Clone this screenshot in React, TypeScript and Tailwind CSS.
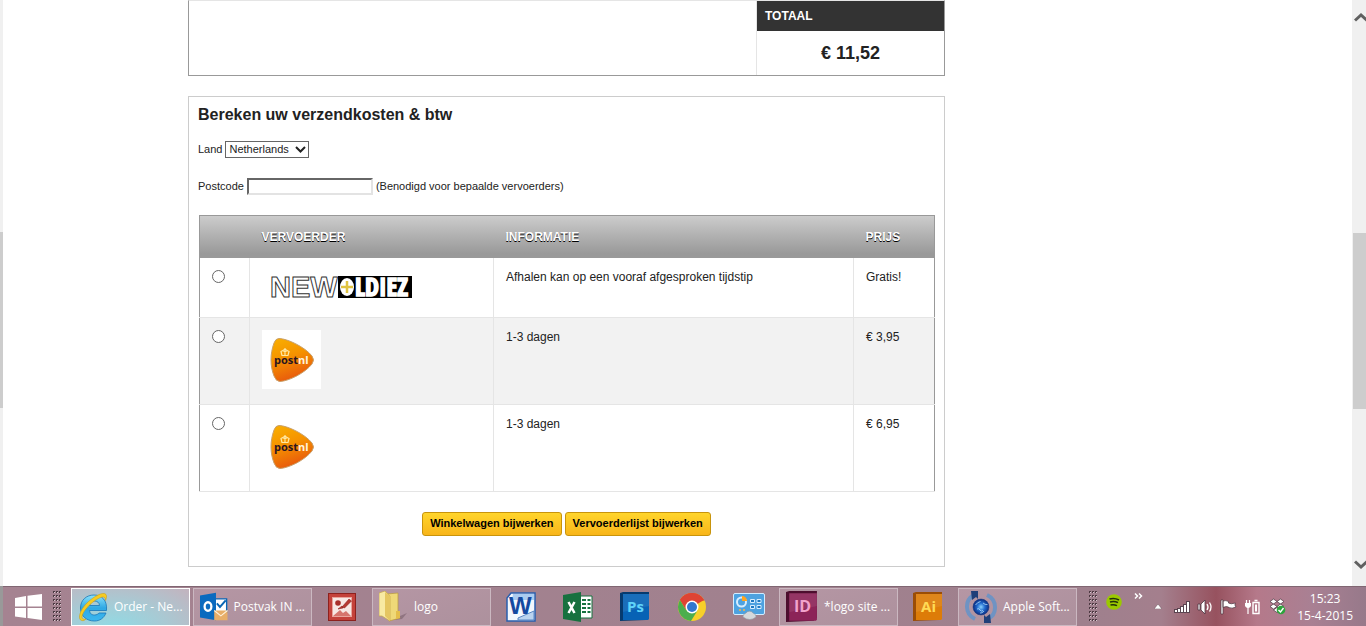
import { useState } from "react";
import type { ReactNode } from "react";

type Carrier = {
  id: string;
  name: string;
  logo: ReactNode;
  info: string;
  price: string;
};

const carriers: Carrier[] = [
  {
    id: "pickup",
    name: "New Oldiez",
    logo: <NewOldiezLogo />,
    info: "Afhalen kan op een vooraf afgesproken tijdstip",
    price: "Gratis!",
  },
  {
    id: "postnl",
    name: "PostNL",
    logo: <PostNlLogo />,
    info: "1-3 dagen",
    price: "€ 3,95",
  },
  {
    id: "postnl-signed",
    name: "PostNL aangetekend",
    logo: <PostNlLogo />,
    info: "1-3 dagen",
    price: "€ 6,95",
  },
];

function NewOldiezLogo() {
  return (
    <svg width="160" height="32" viewBox="0 0 160 32" className="block">
      <text
        x="8"
        y="27"
        fontFamily="Liberation Sans, Arial, sans-serif"
        fontSize="29"
        fill="#fff"
        fontWeight="700"
        stroke="#333"
        strokeWidth="1"
      >
        NEW
      </text>
      <rect x="76" y="6" width="74" height="22" fill="#000" />
      <ellipse cx="85" cy="17" rx="7" ry="9" fill="#fff" />
      <path d="M85 11v12M79 17h12" stroke="#e0c341" strokeWidth="2.5" />
      <text
        x="93"
        y="26"
        fontFamily="Liberation Sans Narrow, Open Sans Condensed, Liberation Sans, sans-serif"
        fontSize="25"
        fontWeight="700"
        fill="#fff"
        stroke="#fff"
        strokeWidth="1.5"
      >
        LDIEZ
      </text>
    </svg>
  );
}

function PostNlLogo() {
  return (
    <svg width="59" height="59" viewBox="0 0 59 59" className="block">
      <defs>
        <linearGradient id="postnl" x1="0" y1="0" x2="0.35" y2="1">
          <stop offset="0" stopColor="#f9b000" />
          <stop offset="0.5" stopColor="#f59200" />
          <stop offset="1" stopColor="#e85a0c" />
        </linearGradient>
      </defs>
      <rect width="59" height="59" fill="#fff" />
      <path
        d="M17 8.500C25 8.500 43 17 50 26Q53 30 50 34C43 43 27 51 18 51.500Q14 51.500 12 46C8 36 8 24 12 13Q13.500 8.500 17 8.500Z"
        fill="url(#postnl)"
        stroke="#c9a06a"
        strokeWidth="1"
      />
      <path
        d="M20 25.500l-1-4 2-1 2 1.500 2-1.500 2 1-1 4zM23 18v7M21.500 19.500h3"
        fill="none"
        stroke="#ffe9a3"
        strokeWidth="1.200"
      />
      <text x="12" y="34" fontFamily="Open Sans, sans-serif" fontSize="11" fontWeight="700" fill="#2a1420">
        post<tspan fill="#fff3dc">nl</tspan>
      </text>
    </svg>
  );
}

function CartTotal() {
  return (
    <div className="flex h-[76px] border border-[#999] border-t-[#e5e5e5]">
      <div className="flex-1 border-r border-[#e5e5e5]" />
      <div className="w-[187px]">
        <h3 className="h-[30px] bg-[#333] pl-2 text-xs leading-[30px] font-bold text-white">TOTAAL</h3>
        <p className="text-center text-lg leading-[44px] font-bold">€ 11,52</p>
      </div>
    </div>
  );
}

function ShippingTable() {
  const [selected, setSelected] = useState("");

  return (
    <table className="w-full table-fixed border-collapse border-x border-t border-[#999] text-left text-xs">
      <colgroup>
        <col className="w-[50px]" />
        <col className="w-[244px]" />
        <col />
        <col className="w-[81px]" />
      </colgroup>
      <thead>
        <tr className="h-[42px] bg-linear-to-b from-[#ccc] to-[#999] to-90% text-white [text-shadow:0_1px_0_#000]">
          <th />
          <th className="px-3">VERVOERDER</th>
          <th className="px-3">INFORMATIE</th>
          <th className="px-3">PRIJS</th>
        </tr>
      </thead>
      <tbody>
        {carriers.map((carrier) => (
          <tr key={carrier.id} className="border-b border-[#e5e5e5] align-top even:bg-[#f2f2f2]">
            <td className="border-r border-[#e5e5e5] px-3 py-3">
              <input
                type="radio"
                name="carrier"
                aria-label={carrier.name}
                checked={selected === carrier.id}
                onChange={() => setSelected(carrier.id)}
                className="block size-[13px] appearance-none rounded-full border border-[#666] bg-white checked:bg-[#333]"
              />
            </td>
            <td className="border-r border-[#e5e5e5] px-3 pt-3 pb-[15px]">{carrier.logo}</td>
            <td className="border-r border-[#e5e5e5] px-3 py-[11px]">{carrier.info}</td>
            <td className="px-3 py-[11px]">{carrier.price}</td>
          </tr>
        ))}
      </tbody>
    </table>
  );
}

function YellowButton({ children }: { children: ReactNode }) {
  return (
    <button
      type="button"
      className="h-6 rounded-[3px] border border-[#c8940c] bg-linear-to-b from-[#ffd52b] to-[#f8b51a] px-[7px] text-[11px] font-bold text-black"
    >
      {children}
    </button>
  );
}

function ShippingForm() {
  return (
    <form className="mt-5 border border-[#ccc] px-[9px] pb-[30px]">
      <h2 className="pt-2 text-base leading-5 font-bold">Bereken uw verzendkosten &amp; btw</h2>
      <div className="mt-4 flex items-center gap-[3px] text-[11px]">
        <label htmlFor="country">Land</label>
        <div className="relative">
          <select
            id="country"
            className="block h-[17px] w-[84px] appearance-none border border-[#666] bg-white pl-[3px] text-[11px] leading-[15px]"
          >
            <option>Netherlands</option>
          </select>
          <svg width="11" height="8" viewBox="0 0 11 8" className="pointer-events-none absolute top-[5px] right-[3px]">
            <path d="M1 1l4.500 4.500L10 1" fill="none" stroke="#222" strokeWidth="2" />
          </svg>
        </div>
      </div>
      <div className="mt-5 flex items-center gap-[3px] text-[11px]">
        <label htmlFor="postcode">Postcode</label>
        <input
          id="postcode"
          type="text"
          className="h-[17px] w-[126px] border-2 border-t-[#666] border-r-[#e3e3e3] border-b-[#e3e3e3] border-l-[#666] bg-white"
        />
        <span>(Benodigd voor bepaalde vervoerders)</span>
      </div>
      <div className="mt-5 pl-px">
        <ShippingTable />
      </div>
      <div className="mt-5 flex justify-center gap-[3px]">
        <YellowButton>Winkelwagen bijwerken</YellowButton>
        <YellowButton>Vervoerderlijst bijwerken</YellowButton>
      </div>
    </form>
  );
}

function ScrollBar() {
  return (
    <div className="flex w-[14px] shrink-0 flex-col items-end justify-between overflow-hidden bg-[#f0f0f0] pt-3 pb-4">
      <svg width="12" height="12" viewBox="0 0 12 12" className="shrink-0">
        <path d="M1 8.500l6-5.500 6 5.500" fill="none" stroke="#606060" strokeWidth="3" />
      </svg>
      <div className="mt-[60px] h-[176px] w-[13px] bg-[#cdcdcd]" />
      <svg width="12" height="12" viewBox="0 0 12 12" className="shrink-0">
        <path d="M1 3.500l6 5.500 6-5.500" fill="none" stroke="#606060" strokeWidth="3" />
      </svg>
    </div>
  );
}

function Grip() {
  return (
    <svg width="9" height="31" viewBox="0 0 9 31" className="shrink-0">
      <defs>
        <pattern id="grip" width="3" height="4" patternUnits="userSpaceOnUse">
          <rect width="2" height="2" fill="#4c3942" />
          <rect x="1" y="1" width="1" height="1" fill="#d8c6ce" />
        </pattern>
      </defs>
      <rect width="9" height="31" fill="url(#grip)" />
    </svg>
  );
}

function WindowsIcon() {
  return (
    <svg width="27" height="26" viewBox="0 0 27 26" fill="#fff">
      <path d="M0 4l11-2v10.500H0zM12.500 1.800L27 0v12.500H12.500zM0 14h11v10L0 22.500zM12.500 14H27v12l-14.500-2z" />
    </svg>
  );
}

function ExplorerIcon() {
  return (
    <svg width="30" height="30" viewBox="0 0 30 30">
      <defs>
        <linearGradient id="ie" x1="0" y1="0" x2="0" y2="1">
          <stop offset="0" stopColor="#8be3fb" />
          <stop offset="0.5" stopColor="#2fa8e4" />
          <stop offset="1" stopColor="#3cb7ef" />
        </linearGradient>
      </defs>
      <path
        d="M28.500 18.500H11.500c.5 3.500 2.500 4.500 5 4.500 2 0 3.500-.8 4.500-2h7c-2 5-6.200 8-11.500 8C8.500 29 2.500 24 2.500 16S8.500 3 16 3s13.500 5 12.500 15.500zM11.500 13.500h10C21.500 10.500 19 9 16.500 9s-4.500 1.500-5 4.500z"
        fill="url(#ie)"
        stroke="#1b76b8"
        strokeWidth="0.8"
      />
      <path
        d="M6 28.500C-1.500 30 1 19.500 8 12S25.500-1 28 2.500c1 1.500.5 3.500-.5 6 0-4-2.500-4.500-7-2C13 10 4 20 4 25c0 2 1.500 2.500 4 2z"
        fill="#f6cb22"
        stroke="#c99a10"
        strokeWidth="0.500"
      />
    </svg>
  );
}

function OutlookIcon() {
  return (
    <svg width="31" height="31" viewBox="0 0 31 31">
      <path d="M17 7h13v15H17z" fill="#fff" stroke="#0a66b5" strokeWidth="1.500" />
      <path d="M19 12l3.500 4L29 8.500" fill="none" stroke="#0a66b5" strokeWidth="2.200" />
      <path d="M0 3l18-3v31L0 28z" fill="#0a6abf" />
      <ellipse cx="9" cy="15.500" rx="3.800" ry="4.800" fill="none" stroke="#fff" strokeWidth="2.600" />
      <path d="M16 20h15v11H16z" fill="#e8ae68" />
      <path d="M16 20l7.500 6 7.500-6" fill="none" stroke="#fff2dd" strokeWidth="1.200" />
    </svg>
  );
}

function PictureManagerIcon() {
  return (
    <svg width="28" height="28" viewBox="0 0 28 28">
      <rect x="0.500" y="0.500" width="27" height="27" fill="#c4423b" stroke="#8d211e" />
      <rect x="4.500" y="4.500" width="19" height="19" fill="#f7e8e4" stroke="#e9a49c" />
      <circle cx="10" cy="10" r="2.800" fill="#a82f2a" />
      <path d="M5 23l7-6 3 3 3-2 5 5z" fill="#d6756d" />
      <path d="M14 14l7-8 2.500 2-7 7zM14 13l-4 3 5-1z" fill="#b63a32" stroke="#8d211e" strokeWidth="0.600" />
    </svg>
  );
}

function FolderIcon() {
  return (
    <svg width="29" height="31" viewBox="0 0 29 31">
      <path d="M15 29l6-4 7-3-5 6z" fill="#705662" opacity="0.500" />
      <path d="M8 3l11-1v20l2 5-11 3z" fill="#efd878" stroke="#b99a3c" strokeWidth="0.700" />
      <path d="M17 20h4v7l-4 1z" fill="#e4bd4b" />
      <path d="M0 2l6-2 5 5v25L3 25H0z" fill="#f8eaa3" stroke="#c5a648" strokeWidth="0.700" />
      <path d="M6 1v24l5 5V5z" fill="#e5c661" />
    </svg>
  );
}

function WordIcon() {
  return (
    <svg width="30" height="30" viewBox="0 0 30 30">
      <path d="M5 1h24v28H1V6z" fill="#f3f8fe" stroke="#2a5fae" strokeWidth="1.500" />
      <path d="M7 2h21v6H6z" fill="#aacbf0" />
      <path d="M12 26l16-7v9H12z" fill="#bad3ef" stroke="#5a86c3" />
      <text x="3" y="22" fontFamily="Liberation Sans, sans-serif" fontWeight="700" fontSize="24" fill="#1549a0">
        W
      </text>
    </svg>
  );
}

function ExcelIcon() {
  return (
    <svg width="30" height="30" viewBox="0 0 30 30">
      <path d="M16 4h13v22H16z" fill="#fff" stroke="#17713f" />
      <path
        d="M19 8h4M24.500 8h3M19 12h4M24.500 12h3M19 16h4M24.500 16h3M19 20h4M24.500 20h3"
        stroke="#17713f"
        strokeWidth="2"
      />
      <path d="M0 3l18-3v30L0 27z" fill="#17713f" />
      <path d="M5.500 10l6 11M11.500 10l-6 11" stroke="#fff" strokeWidth="2.500" />
    </svg>
  );
}

type AdobeIconProps = { label: string; front: string; side: string; text: string; size?: number };

function AdobeIcon({ label, front, side, text, size = 30 }: AdobeIconProps) {
  return (
    <svg width={size} height={size} viewBox="0 0 30 30">
      <path d="M0 1l3-1h26v25l-3 3-26 1z" fill={side} />
      <path d="M3 2h26v25l-1 1H3z" fill={front} />
      <path d="M3 2h26v12L3 20z" fill="#fff" opacity="0.080" />
      <text
        x="15.500"
        y="20"
        textAnchor="middle"
        fontFamily="Open Sans, sans-serif"
        fontWeight="700"
        fontSize="15"
        fill={text}
      >
        {label}
      </text>
    </svg>
  );
}

function ChromeIcon() {
  return (
    <svg width="28" height="28" viewBox="0 0 28 28">
      <circle cx="14" cy="14" r="14" fill="#f7cf2a" />
      <path d="M14 14L1.900 7A14 14 0 0 1 26.100 7z" fill="#de4434" />
      <path d="M14 7.500h12.400A14 14 0 0 0 1.900 7l6 10z" fill="#de4434" />
      <path d="M1.900 7A14 14 0 0 0 13 28l6.500-10.500L14 20l-6-3z" fill="#4cae4d" />
      <circle cx="14" cy="14" r="6.500" fill="#fff" />
      <circle cx="14" cy="14" r="5" fill="#3277cf" />
    </svg>
  );
}

function ControlPanelIcon() {
  return (
    <svg width="32" height="28" viewBox="0 0 32 28">
      <rect x="0.500" y="0.500" width="31" height="21" rx="1.500" fill="#4ea2e0" stroke="#d2ecff" />
      <circle cx="8.500" cy="9" r="4.500" fill="none" stroke="#d6edff" strokeWidth="2" />
      <path d="M9 8V3a5 5 0 0 1 5 5z" fill="#ffa51f" />
      <path d="M17.500 6.500h4v3h-4zM24 6.500h4v3h-4zM17.500 12.500h4v3h-4zM24 12.500h4v3h-4z" fill="#207ac3" stroke="#d6edff" />
      <circle cx="7" cy="17" r="1" fill="#ffb33e" />
      <circle cx="11" cy="17" r="1" fill="#ffb33e" />
      <path
        d="M10 24a6 4 0 0 1 3-4 4 3.500 0 0 1 7 0 6 4 0 0 1 3 4q-6 5-13 0z"
        fill="#d5d8dc"
        stroke="#9199a1"
        strokeWidth="0.600"
      />
    </svg>
  );
}

function AppleUpdateIcon() {
  return (
    <svg width="32" height="32" viewBox="0 0 32 32">
      <defs>
        <radialGradient id="globe">
          <stop offset="0" stopColor="#8bd2ff" />
          <stop offset="0.5" stopColor="#2169cc" />
          <stop offset="1" stopColor="#0b2c80" />
        </radialGradient>
      </defs>
      <path d="M10 28C-.5 23-.5 9 9 4" fill="none" stroke="#6f93c3" strokeWidth="4" />
      <path d="M22 4c10.500 5 10.500 19 1 24" fill="none" stroke="#6f93c3" strokeWidth="4" />
      <path d="M6 0h7v8l-2-2-4 3z" fill="#203f79" />
      <path d="M26 32h-7v-8l2 2 4-3z" fill="#203f79" />
      <circle cx="16" cy="16" r="8" fill="url(#globe)" stroke="#143882" strokeWidth="0.500" />
      <path
        d="M10.500 14q2-3 5-3.500M12 18q2-1 3 1t3 .5M18 12q2 2 4.500 1.500M15 22q2 .5 4-2"
        fill="none"
        stroke="#c2eaff"
        strokeWidth="0.900"
        opacity="0.800"
      />
    </svg>
  );
}

type TaskButtonProps = { label: string; active?: boolean; children: ReactNode };

function TaskButton({ label, active = false, children }: TaskButtonProps) {
  return (
    <button
      type="button"
      className={
        active
          ? "flex h-[38px] w-[119px] items-center gap-[6px] border border-white bg-radial-[at_35%_110%] from-[#8fdbe5] via-[#a9c9d3] to-[#c3b3be] px-[6px] whitespace-nowrap"
          : "flex h-[38px] w-[119px] items-center gap-[6px] border border-[#cbb8c1] bg-linear-to-br from-[#b596a4] to-[#ad919d] px-[6px] whitespace-nowrap"
      }
    >
      {children}
      <span>{label}</span>
    </button>
  );
}

function TaskIcon({ label, children }: { label: string; children: ReactNode }) {
  return (
    <button type="button" aria-label={label} className="flex h-[38px] w-[54px] items-center justify-center">
      {children}
    </button>
  );
}

function SystemTray() {
  return (
    <div className="flex flex-1 items-center">
      <svg width="16" height="30" viewBox="0 0 16 30">
        <circle cx="8" cy="10" r="7.800" fill="#9bc900" />
        <path
          d="M3.500 7q5-1.500 9.500 1M4 10q4.500-1.300 8 .7M4.500 13q3.500-1 6.500.7"
          fill="none"
          stroke="#22300a"
          strokeWidth="1.500"
        />
      </svg>
      <svg width="9" height="30" viewBox="0 0 9 30" className="ml-3">
        <path d="M1 1.500L3.500 4 1 6.500M5 1.500L7.500 4 5 6.500" fill="none" stroke="#fff" strokeWidth="1.500" />
      </svg>
      <svg width="8" height="5" viewBox="0 0 8 5" className="ml-[11px]">
        <path d="M0 5l4-5 4 5z" fill="#fff" stroke="#644b57" strokeWidth="0.500" />
      </svg>
      <svg width="17" height="14" viewBox="0 0 17 14" className="ml-3">
        <path
          d="M0 9h4v4H0zM3 8h4v5H3zM6 6h4v7H6zM9 4h4v9H9zM12 1h4v12h-4z"
          fill="#5a4450"
        />
        <path d="M1 10h2v2H1zM4 9h2v3H4zM7 7h2v5H7zM10 5h2v7h-2zM13 2h2v10h-2z" fill="#fff" />
      </svg>
      <svg width="17" height="16" viewBox="0 0 17 16" className="ml-[6px]">
        <path d="M1 5h2v6H1zM4 5l4-4v14l-4-4z" fill="#fff" stroke="#4b3541" strokeWidth="0.800" />
        <path d="M10 5q2 3 0 6M12.500 3.500q3 4.500 0 9" fill="none" stroke="#fff" strokeWidth="1.300" />
      </svg>
      <svg width="17" height="16" viewBox="0 0 17 16" className="ml-[6px]">
        <path
          d="M1 1h2v14H1zM3 2q3-1 5.500.5V4q2 1.500 7 0-1.500 2 .5 4-4 2-7.500.5V8Q6 7 3 8.500z"
          fill="#fff"
          stroke="#4b3541"
          strokeWidth="0.700"
        />
      </svg>
      <svg width="17" height="16" viewBox="0 0 17 16" className="ml-[7px]">
        <path d="M2.500 1v4M5.500 1v4M4 8v7" stroke="#fff" strokeWidth="1.200" />
        <path d="M1 4h6v3q-1 2-3 2T1 7z" fill="#fff" />
        <path d="M9 3.500h6v11H9zM10.500 1.500h3" fill="none" stroke="#fff" strokeWidth="1.400" />
        <path d="M11 5.500h2v7h-2z" fill="#fff" />
      </svg>
      <svg width="17" height="17" viewBox="0 0 17 17" className="ml-2">
        <path
          d="M4.500 1l3.500 2.500L4.500 6 1 3.500zM11.500 1L15 3.500 11.500 6 8 3.500zM4.500 6L8 8.500 4.500 11 1 8.500zM11.500 6L15 8.500 11.500 11 8 8.500zM4.500 12L8 9.500l3.500 2.500L8 14.500z"
          fill="#fff"
          stroke="#48343f"
          strokeWidth="0.700"
        />
        <circle cx="12" cy="12" r="4.300" fill="#2da43c" />
        <path d="M9.500 12l2 2 3-4" fill="none" stroke="#fff" strokeWidth="1.400" />
      </svg>
      <div className="ml-auto text-center leading-[17px]">
        <div>15:23</div>
        <div>15-4-2015</div>
      </div>
    </div>
  );
}

function Taskbar() {
  return (
    <footer className="flex h-10 shrink-0 border-l-[3px] border-[#999] bg-[linear-gradient(90deg,#a58391_0%,#9f808d_80%,#a47f8d_85%,#97525f_89%,#b5798a_92%,#a98093_96%,#97798a_100%)] font-['Open_Sans','Noto_Sans',sans-serif] text-xs text-white">
      <div className="flex w-full items-center border-t border-[#806672] pr-[13px]">
        <button type="button" aria-label="Start" className="ml-3">
          <WindowsIcon />
        </button>
        <div className="mr-[9px] ml-[11px]">
          <Grip />
        </div>
        <div className="flex gap-[3px]">
          <TaskButton label="Order - Ne..." active>
            <ExplorerIcon />
          </TaskButton>
          <TaskButton label="Postvak IN ...">
            <OutlookIcon />
          </TaskButton>
          <TaskIcon label="Picture Manager">
            <PictureManagerIcon />
          </TaskIcon>
          <TaskButton label="logo">
            <FolderIcon />
          </TaskButton>
          <TaskIcon label="Word">
            <WordIcon />
          </TaskIcon>
          <TaskIcon label="Excel">
            <ExcelIcon />
          </TaskIcon>
          <TaskIcon label="Photoshop">
            <AdobeIcon label="Ps" front="#0762b5" side="#063a6e" text="#5fd4fa" />
          </TaskIcon>
          <TaskIcon label="Chrome">
            <ChromeIcon />
          </TaskIcon>
          <TaskIcon label="Configuratiescherm">
            <ControlPanelIcon />
          </TaskIcon>
          <TaskButton label="*logo site ...">
            <AdobeIcon label="ID" front="#8c2458" side="#4d0d2e" text="#f2a3cc" size={32} />
          </TaskButton>
          <TaskIcon label="Illustrator">
            <AdobeIcon label="Ai" front="#dd7c08" side="#9b4d05" text="#ffdb55" />
          </TaskIcon>
          <TaskButton label="Apple Soft...">
            <AppleUpdateIcon />
          </TaskButton>
        </div>
        <div className="mr-2 ml-3">
          <Grip />
        </div>
        <SystemTray />
      </div>
    </footer>
  );
}

export default function App() {
  return (
    <div className="flex h-screen flex-col overflow-hidden bg-white font-['Liberation_Sans',Arial,sans-serif] text-[#222]">
      <div className="flex min-h-0 flex-1">
        <div className="flex w-[3px] shrink-0 flex-col justify-center bg-[#f0f0f0] pt-[54px]">
          <div className="h-[176px] bg-[#cdcdcd]" />
        </div>
        <main className="flex-1 pl-[185px]">
          <div className="max-w-[757px]">
            <CartTotal />
            <ShippingForm />
          </div>
        </main>
        <ScrollBar />
      </div>
      <Taskbar />
    </div>
  );
}
